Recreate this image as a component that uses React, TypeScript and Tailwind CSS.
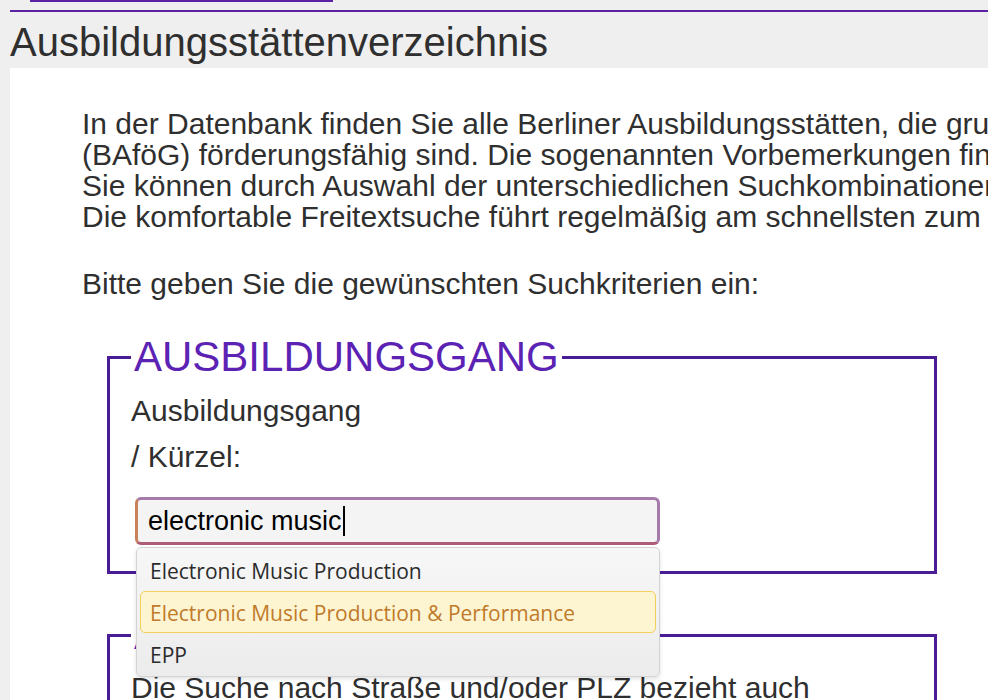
import React from 'react';

const suggestions = [
  { label: 'Electronic Music Production', active: false },
  { label: 'Electronic Music Production & Performance', active: true },
  { label: 'EPP', active: false },
];

const App: React.FC = () => {
  return (
    <div className="w-[988px] h-[700px] overflow-hidden bg-[#efefef] text-[#2f2f2f] font-['Liberation_Sans',Arial,sans-serif]">
      {/* header lines */}
      <div className="ml-[30px] w-[303px] h-[2px] bg-[#5b22a4]"></div>
      <div className="ml-[10px] mt-[8px] h-[2px] bg-[#5b22a4]"></div>

      <h1 className="ml-[10px] pt-[5px] text-[40px] leading-[51px] whitespace-nowrap">
        Ausbildungsstättenverzeichnis
      </h1>

      {/* content area */}
      <div className="ml-[10px] w-[1200px] h-[700px] bg-white pt-[40px]">
        <div className="pl-[72px] text-[30px] leading-[31px] whitespace-nowrap">
          <p>
            In der Datenbank finden Sie alle Berliner Ausbildungsstätten, die grundsätzlich nach dem Bundesausbildungsförderungsgesetz
            <br />
            (BAföG) förderungsfähig sind. Die sogenannten Vorbemerkungen finden Sie hier.
            <br />
            Sie können durch Auswahl der unterschiedlichen Suchkombinationen Ihre Suche eingrenzen.
            <br />
            Die komfortable Freitextsuche führt regelmäßig am schnellsten zum Ziel.
          </p>
          <p className="mt-[36px]">Bitte geben Sie die gewünschten Suchkriterien ein:</p>
        </div>

        {/* Ausbildungsgang */}
        <fieldset className="relative ml-[97px] mt-[37px] w-[830px] border-[3px] border-[#4a1c96] pl-[21px] pb-[26px]">
          <legend className="px-[3px] text-[42px] leading-[42px] text-[#5b22b4]">AUSBILDUNGSGANG</legend>
          <div className="pt-[10px] text-[30px] leading-[46px]">
            Ausbildungsgang
            <br />/ Kürzel:
          </div>
          <div className="relative mt-[17px] ml-[4px] w-[525px]">
            <div className="flex h-[48px] items-center rounded-[6px] border-[3px] border-[#a67bac] border-b-[#ad5c78] border-l-[#c88159] bg-[#f4f4f4] pl-[10px] text-[27px] text-black">
              <span>electronic music</span>
              <span className="ml-[1px] h-[30px] w-[2px] bg-black"></span>
            </div>

            {/* autocomplete menu */}
            <ul className="absolute left-[1px] top-[50px] z-10 w-[524px] rounded-[5px] border border-[#d4d4d4] bg-gradient-to-b from-[#f7f7f7] to-[#ececec] px-[3px] py-[1px] shadow-[0_2px_4px_rgba(0,0,0,0.12)] font-['Open_Sans','Noto_Sans',sans-serif] text-[21px]">
              {suggestions.map((s, i) => (
                <li
                  key={i}
                  className={
                    s.active
                      ? 'h-[42px] rounded-[5px] border border-[#f5cf5c] bg-[#fdf5d2] px-[9px] pt-[2px] leading-[38px] text-[#c07a2a]'
                      : 'h-[42px] border border-transparent px-[9px] pt-[2px] leading-[38px] text-[#2b2b2b]'
                  }
                >
                  {s.label}
                </li>
              ))}
            </ul>
          </div>
        </fieldset>

        {/* Standort */}
        <fieldset className="ml-[97px] mt-[40px] w-[830px] border-[3px] border-[#4a1c96] pl-[21px]">
          <legend className="px-[3px] text-[42px] leading-[42px] text-[#5b22b4]">ADRESSE</legend>
          <div className="pt-[16px] text-[30px] leading-[31px] whitespace-nowrap">
            Die Suche nach Straße und/oder PLZ bezieht auch
          </div>
        </fieldset>
      </div>
    </div>
  );
};

export default App;
